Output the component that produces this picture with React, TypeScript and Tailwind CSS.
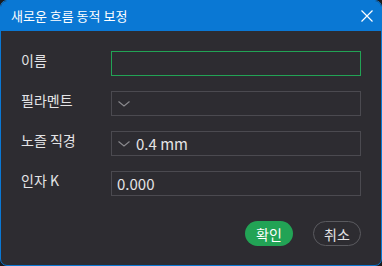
import { useState } from "react";

const FONT = { fontFamily: '"Noto Sans CJK KR", "Noto Sans", sans-serif' };

function Chevron() {
  return (
    <svg width="12" height="6" viewBox="0 0 12 6" className="shrink-0">
      <path d="M0.5 0.5 L6 5 L11.5 0.5" fill="none" stroke="#8a8a8e" strokeWidth="1.1" />
    </svg>
  );
}

function Row({ label, children }: { label: string; children: React.ReactNode }) {
  return (
    <div className="flex items-start">
      <div className="w-[90px] shrink-0 text-[14px] leading-[19px] text-[#e4e4e6]">{label}</div>
      {children}
    </div>
  );
}

export default function App() {
  const [name, setName] = useState("");
  return (
    <div className="w-[382px] h-[266px] bg-[#1b1b1d]" style={FONT}>
      <div className="w-full h-full flex flex-col rounded-[7px] border border-[#0a78d4] bg-[#2d2c31] overflow-hidden">
        <div className="h-[30px] shrink-0 bg-[#0a78d4] flex items-center pl-[10px] pr-[8px]">
          <span className="text-[13px] text-white">새로운 흐름 동적 보정</span>
          <button className="ml-auto w-[13px] h-[13px] flex items-center justify-center">
            <svg width="12" height="12" viewBox="0 0 12 12">
              <path d="M0.5 0.5 L11.5 11.5 M11.5 0.5 L0.5 11.5" stroke="white" strokeWidth="1.2" />
            </svg>
          </button>
        </div>

        <div className="flex-1 flex flex-col px-[20px] pt-[20px]">
          <div className="flex flex-col gap-[15px]">
            <Row label="이름">
              <input
                value={name}
                onChange={(e) => setName(e.target.value)}
                className="w-[250px] h-[25px] border border-[#22a355] bg-transparent outline-none px-[5px] text-[15px] text-[#e4e4e6]"
              />
            </Row>
            <Row label="필라멘트">
              <div className="w-[250px] h-[25px] border border-[#4b4a50] flex items-center pl-[6px] gap-[6px]">
                <Chevron />
              </div>
            </Row>
            <Row label="노즐 직경">
              <div className="w-[250px] h-[25px] border border-[#4b4a50] flex items-center pl-[6px] gap-[6px]">
                <Chevron />
                <span className="text-[15px] text-[#e4e4e6] leading-none">0.4 mm</span>
              </div>
            </Row>
            <Row label="인자 K">
              <div className="w-[250px] h-[25px] border border-[#4b4a50] flex items-center px-[5px]">
                <span className="text-[15px] text-[#e4e4e6] leading-none">0.000</span>
              </div>
            </Row>
          </div>

          <div className="flex justify-end gap-[20px] mt-[25px]">
            <button className="w-[48px] h-[25px] rounded-full bg-[#22a355] text-white text-[14px] leading-none">확인</button>
            <button className="w-[48px] h-[25px] rounded-full border border-[#5a5a5f] text-[#e4e4e6] text-[14px] leading-none">취소</button>
          </div>
        </div>
      </div>
    </div>
  );
}
